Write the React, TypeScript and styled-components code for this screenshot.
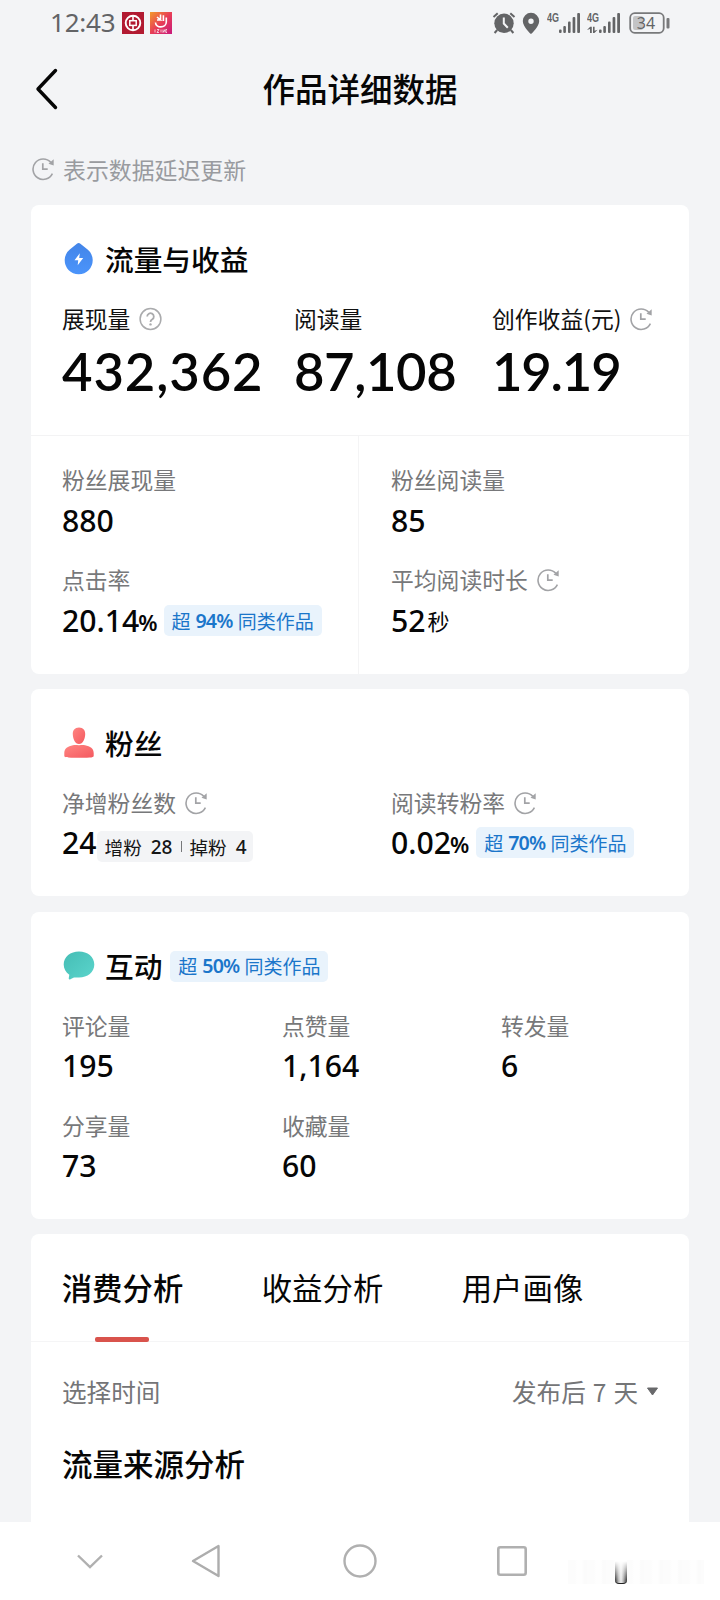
import React from "react";
import styled, { createGlobalStyle } from "styled-components";

const cjk = `"Noto Sans CJK SC", sans-serif`;
const numeric = `"Noto Sans", "Noto Sans CJK SC", sans-serif`;

const GlobalStyle = createGlobalStyle`
  * { box-sizing: border-box; }
  html, body { margin: 0; padding: 0; background: #f3f4f6; }
  body { font-family: ${cjk}; color: #060606; }
  svg { display: block; flex: none; }
`;

const Screen = styled.div`
  width: 720px;
  height: 1600px;
  overflow: hidden;
  display: flex;
  flex-direction: column;
  background: #f3f4f6;
`;

const StatusBar = styled.header`
  height: 45px;
  padding: 0 49px 0 50px;
  display: flex;
  align-items: center;
  justify-content: space-between;
  color: #636466;
`;

const StatusGroup = styled.div`
  display: flex;
  align-items: center;
`;

const Clock = styled.span`
  width: 72px;
  font: 400 26px/45px ${numeric};
  letter-spacing: -0.2px;
`;

const AppBadges = styled.div`
  display: flex;
  gap: 6px;
`;

const StatusIcons = styled.div`
  display: flex;
  align-items: center;
`;

const NavBar = styled.div`
  height: 88px;
  padding: 0 35px;
  display: grid;
  grid-template-columns: 60px 1fr 60px;
  align-items: center;
`;

const PageTitle = styled.h1`
  margin: 0 0 2px;
  text-align: center;
  font: 500 32.5px/48px ${cjk};
`;

const DelayNote = styled.div`
  height: 72px;
  padding: 0 32px;
  display: flex;
  align-items: center;
  gap: 8px;
  color: #999b9f;
  font-size: 22.9px;
  line-height: 34px;
`;

const Content = styled.main`
  flex: 1;
  padding: 0 31px;
  display: flex;
  flex-direction: column;
  min-height: 0;
`;

const Card = styled.section<{ $height: number; $after?: number; $open?: boolean }>`
  flex: none;
  height: ${(p) => p.$height}px;
  margin-bottom: ${(p) => p.$after ?? 0}px;
  border-radius: ${(p) => (p.$open ? "8px 8px 0 0" : "8px")};
  background: #fff;
  display: flex;
  flex-direction: column;
`;

const CardHeading = styled.div<{ $top: number }>`
  margin: ${(p) => p.$top}px 32px 0;
  height: 40px;
  display: flex;
  align-items: center;
`;

const HeadingText = styled.h2`
  margin: 0 8px 0 10px;
  font: 500 28.7px/40px ${cjk};
`;

const Metric = styled.div`
  display: flex;
  flex-direction: column;
`;

const MetricLabel = styled.div<{ $dark?: boolean }>`
  height: 32px;
  display: flex;
  align-items: center;
  gap: 9px;
  white-space: nowrap;
  font-size: 22.8px;
  line-height: 30px;
  padding-bottom: 1px;
  color: ${(p) => (p.$dark ? "#111" : "#77787a")};
`;

const MetricValue = styled.div`
  height: 40px;
  margin-top: 5px;
  display: flex;
  align-items: center;
  white-space: nowrap;
  font: 500 30.2px/40px ${numeric};
`;

const Unit = styled.span<{ $cjk?: boolean }>`
  font: ${(p) => (p.$cjk ? 400 : 600)} 22px/40px ${numeric};
  margin: ${(p) => (p.$cjk ? "0 0 0 2px" : "2px 0 0 -1px")};
`;

const HeroRow = styled.div`
  margin-top: 16px;
  height: 141px;
  padding: 8px 31px 0;
  display: grid;
  grid-template-columns: 232px 198px 1fr;
  border-bottom: 1px solid #f3f3f4;
`;

const HeroValue = styled.div<{ $tracking: number }>`
  height: 64px;
  margin-top: 4px;
  font: 600 52.6px/64px Lato, ${cjk};
  letter-spacing: ${(p) => p.$tracking}px;
  white-space: nowrap;
`;

const SplitPanel = styled.div`
  flex: 1;
  display: grid;
  grid-template-columns: 328px 1fr;
`;

const SplitColumn = styled.div<{ $divided?: boolean }>`
  padding: 28px 0 0 ${(p) => (p.$divided ? 31 : 32)}px;
  border-right: ${(p) => (p.$divided ? "1px solid #f4f4f5" : "none")};
  display: flex;
  flex-direction: column;
  gap: 23px;
`;

const MetricGrid = styled.div<{ $columns: string; $top: number }>`
  margin-top: ${(p) => p.$top}px;
  padding-left: 31px;
  display: grid;
  grid-template-columns: ${(p) => p.$columns};
  row-gap: 24px;

  ${MetricValue} {
    margin-top: 4px;
  }
`;

const Tag = styled.span<{ $gap?: number }>`
  height: 31px;
  width: 158px;
  margin-left: ${(p) => p.$gap ?? 0}px;
  margin-bottom: ${(p) => (p.$gap ? 1 : 0)}px;
  border-radius: 5px;
  background: #e9f3fc;
  color: #1b76ca;
  display: flex;
  align-items: center;
  justify-content: center;
  gap: 5px;
  white-space: nowrap;
  font: 400 19px/30px ${cjk};

  b {
    font: 600 19.6px/30px ${numeric};
    letter-spacing: -0.8px;
  }
`;

const FansTag = styled.span`
  height: 31px;
  width: 156px;
  margin-top: 7px;
  border-radius: 5px;
  background: #f3f4f6;
  color: #161616;
  display: flex;
  align-items: center;
  padding-left: 8px;
  white-space: nowrap;
  font: 400 18.6px/30px ${cjk};

  b {
    margin-left: 9px;
    font: 500 19px/30px ${numeric};
  }
`;

const TagRule = styled.i`
  width: 1px;
  height: 11px;
  margin: 0 8px;
  background: #77787a;
`;

const Tabs = styled.nav`
  height: 108px;
  padding-left: 30.5px;
  display: grid;
  grid-template-columns: 200px 200px 1fr;
  border-bottom: 1px solid #f5f5f6;
`;

const Tab = styled.div<{ $active?: boolean }>`
  width: 122px;
  display: flex;
  flex-direction: column;
  align-items: center;
  justify-content: space-between;
  padding-top: 31px;
  white-space: nowrap;
  font: ${(p) => (p.$active ? 500 : 400)} 30.4px/44px ${cjk};

  &::after {
    content: "";
    width: 54px;
    height: 5px;
    margin: 0 2px -1px 0;
    border-radius: 2px;
    background: ${(p) => (p.$active ? "#d9534c" : "transparent")};
  }
`;

const FilterRow = styled.div`
  height: 99px;
  padding: 0 31px 1px;
  display: flex;
  align-items: center;
  justify-content: space-between;
  color: #747577;
  font-size: 24.6px;
  line-height: 36px;
`;

const FilterValue = styled.span`
  display: flex;
  align-items: center;
  gap: 9px;
  word-spacing: 1.5px;
`;

const SectionTitle = styled.h3`
  margin: 0 31px;
  font: 500 30.5px/44px ${cjk};
`;

const SystemNav = styled.footer`
  flex: none;
  height: 78px;
  background: #fff;
  display: flex;
  align-items: center;
  padding-left: 76px;
`;

const NavSlot = styled.div<{ $width: number }>`
  width: ${(p) => p.$width}px;
`;

const Watermark = styled.div`
  width: 136px;
  height: 24px;
  margin-top: 22px;
  padding-left: 47px;
  background: repeating-linear-gradient(90deg, #fcfcfc 0 7px, #fefefe 9px 14px, #fbfbfb 16px 19px);
`;

const WatermarkMark = styled.div`
  width: 12px;
  height: 24px;
  border-radius: 0 0 4px 4px;
  border-bottom: 1px solid #222;
  background:
    linear-gradient(180deg, #fff 5%, rgba(255, 255, 255, 0) 90%),
    linear-gradient(90deg, #333 0, #bbb 30%, #eee 50%, #bbb 68%, #333 100%);
`;

const DelayIcon = () => (
  <svg width="23" height="24" viewBox="0 0 23 24" fill="none" stroke="#a2a3a6" strokeWidth="1.6">
    <path d="M20.4 16.7A10.2 10.2 0 1 1 18.8 5.4" />
    <path d="M21.7 2.2v6.2l-5.2-1.6Z" fill="#a2a3a6" stroke="none" />
    <path d="M10.8 6.3v5.8h4.9" strokeWidth="1.7" />
  </svg>
);

const HelpIcon = () => (
  <svg width="23" height="24" viewBox="0 0 23 24" fill="none" stroke="#aaabad" strokeWidth="1.5">
    <circle cx="11.5" cy="12" r="10.4" />
    <path d="M8.2 9.5a3.3 3.3 0 1 1 5.1 2.8c-1.3.8-1.8 1.3-1.8 2.6" strokeWidth="1.8" />
    <circle cx="11.5" cy="17.4" r="1.2" fill="#aaabad" stroke="none" />
  </svg>
);

const BackIcon = () => (
  <svg width="24" height="42" viewBox="0 0 24 42" fill="none" stroke="#050505" strokeWidth="3.4" strokeLinecap="round" strokeLinejoin="round">
    <path d="M20.5 2.5 3 21l17.5 18.5" />
  </svg>
);

const BankBadge = () => (
  <svg width="22" height="22" viewBox="0 0 22 22" fill="none" stroke="#fff">
    <rect width="22" height="22" fill="#b21a31" stroke="none" />
    <circle cx="11" cy="11" r="7.3" strokeWidth="1.9" />
    <rect x="7.8" y="8.7" width="6.4" height="4.7" strokeWidth="1.5" />
    <path d="M11 4v4.7M11 13.4V18" strokeWidth="1.6" />
  </svg>
);

const GestureBadge = () => (
  <svg width="22" height="22" viewBox="0 0 22 22" fill="none" stroke="#fff">
    <defs>
      <linearGradient id="gesture" x1="0" y1="0" x2="1" y2="1">
        <stop offset="0" stopColor="#f39a2b" />
        <stop offset=".5" stopColor="#e83e56" />
        <stop offset="1" stopColor="#c8197c" />
      </linearGradient>
    </defs>
    <rect width="22" height="22" fill="url(#gesture)" stroke="none" />
    <path d="M5.5 10.5c0 6 10.8 5.8 10.8-.5V5.5M13.4 9V3.2M10.5 8V2.5M7 5l3.5 3H7" strokeWidth="1.6" />
    <path d="M5 17.5v3M7 17.5h2l-2 3h2M11 17.5v3M13 17.5v3l2-3v3M17 17.5h-1v3h1" strokeWidth=".7" />
  </svg>
);

const AlarmIcon = () => (
  <svg width="24" height="24" viewBox="0 0 24 24" fill="none" stroke="#636466">
    <circle cx="12" cy="12.3" r="9.7" fill="#636466" stroke="none" />
    <path d="M1.5 6 5.7 2.2M18.3 2.2 22.5 6M5.2 19l-2.6 3M18.8 19l2.6 3" strokeWidth="2" />
    <path d="M11.8 6.5v6l4 4.3" stroke="#f3f4f6" strokeWidth="2" />
  </svg>
);

const PinIcon = () => (
  <svg width="18" height="24" viewBox="0 0 18 24">
    <path fillRule="evenodd" fill="#636466" d="M9 1.8a8.2 8.2 0 0 0-8.2 8.1C.8 15.8 9 23 9 23s8.2-7.2 8.2-13.1A8.2 8.2 0 0 0 9 1.8Zm0 5.7a2.7 2.7 0 1 1 0 5.4 2.7 2.7 0 0 1 0-5.4Z" />
  </svg>
);

const SignalIcon = ({ active }: { active?: boolean }) => (
  <svg width="34" height="24" viewBox="0 0 34 24" fill="#636466">
    <text x="0" y="10.5" fontSize="12" fontWeight="700" fontFamily="Liberation Sans, sans-serif" textLength="12" lengthAdjust="spacingAndGlyphs">4G</text>
    <rect x="12" y="18.5" width="2.6" height="3.5" rx="1" />
    <rect x="16.3" y="15" width="2.6" height="7" rx="1" />
    <rect x="21" y="10.5" width="2.6" height="11.5" rx="1" />
    <rect x="25.6" y="6" width="2.7" height="16" rx="1" />
    <rect x="30.2" y="2" width="2.8" height="20" rx="1" />
    {active && <path d="m0 19 3.2-3.2h1.6V22H3v-4l-3 1Zm6-3.2h1.6v4l3-1-3.2 3.2H6Z" />}
  </svg>
);

const BatteryIcon = () => (
  <svg width="42" height="24" viewBox="0 0 42 24" fill="none">
    <rect x="1.2" y="2.2" width="33.5" height="19.6" rx="4.5" stroke="#78797b" strokeWidth="1.8" />
    <rect x="4" y="5" width="10" height="14" rx="2" fill="#c3c4c6" />
    <rect x="37.5" y="7" width="3" height="10.5" rx="1" fill="#78797b" />
    <text x="17" y="17.7" textAnchor="middle" fontSize="16" fontWeight="400" fontFamily="Noto Sans, sans-serif" fill="#636466">34</text>
  </svg>
);

const TrafficIcon = () => (
  <svg width="32" height="34" viewBox="0 0 32 34">
    <defs>
      <linearGradient id="traffic" x1="0" y1="0" x2="0" y2="1">
        <stop offset="0" stopColor="#4385e8" />
        <stop offset="1" stopColor="#4b94fb" />
      </linearGradient>
    </defs>
    <path fill="url(#traffic)" d="M13.9 1.8c1.2-1 2.3-1 3.5 0l7.2 5.7a14 14 0 1 1-17.8 0Z" />
    <path fill="#fff" d="m16.8 11.3-5.3 7h3.7l-.5 5 5.5-7.2h-4Z" />
  </svg>
);

const FansIcon = () => (
  <svg width="32" height="34" viewBox="0 0 32 34">
    <defs>
      <linearGradient id="fans" x1="0" y1="0" x2="1" y2="1">
        <stop offset="0" stopColor="#ff8582" />
        <stop offset="1" stopColor="#f4595f" />
      </linearGradient>
    </defs>
    <path fill="url(#fans)" d="M16 1.5c4.3 0 6.5 3 6.2 7-.3 4.7-2.2 9.5-6.2 9.5s-5.9-4.8-6.2-9.5c-.3-4 1.9-7 6.2-7Z" />
    <path fill="url(#fans)" d="M1.3 27c0-4.5 3.5-6.5 8.7-7.7 2.3-.5 3.7 0 6 0s3.7-.5 6 0c5.2 1.2 8.7 3.2 8.7 7.7v2.5c0 2-1.3 2.3-14.7 2.3S1.3 31.5 1.3 29.5Z" />
  </svg>
);

const InteractionIcon = () => (
  <svg width="32" height="34" viewBox="0 0 32 34">
    <defs>
      <linearGradient id="interaction" x1="0" y1="0" x2="1" y2="1">
        <stop offset="0" stopColor="#45bdb5" />
        <stop offset="1" stopColor="#5bd5cc" />
      </linearGradient>
    </defs>
    <path fill="url(#interaction)" d="M16 2.5c8.5 0 15.3 5.3 15.3 13S24.5 28.5 16 28.5c-2 0-3.5-.1-5 .1-1.5.4-2.8 1.5-4 1.8-1.1.3-1.4-.6-1.2-1.600l.5-3C2.8 23.3.7 19.7.7 15.5.7 7.8 7.5 2.5 16 2.5Z" />
  </svg>
);

const PeerTag = ({ percent, gap }: { percent: number; gap?: number }) => (
  <Tag $gap={gap}>
    <span>超</span>
    <b>{percent}%</b>
    <span>同类作品</span>
  </Tag>
);

type StatProps = { label: string; delayed?: boolean; children: React.ReactNode };

const Stat = ({ label, delayed, children }: StatProps) => (
  <Metric>
    <MetricLabel>
      {label}
      {delayed && <DelayIcon />}
    </MetricLabel>
    <MetricValue>{children}</MetricValue>
  </Metric>
);

export default function App() {
  return (
    <Screen>
      <GlobalStyle />
      <StatusBar>
        <StatusGroup>
          <Clock>12:43</Clock>
          <AppBadges>
            <BankBadge />
            <GestureBadge />
          </AppBadges>
        </StatusGroup>
        <StatusIcons>
          <NavSlot $width={30}><AlarmIcon /></NavSlot>
          <NavSlot $width={25}><PinIcon /></NavSlot>
          <NavSlot $width={40}><SignalIcon /></NavSlot>
          <NavSlot $width={42}><SignalIcon active /></NavSlot>
          <BatteryIcon />
        </StatusIcons>
      </StatusBar>

      <NavBar>
        <BackIcon />
        <PageTitle>作品详细数据</PageTitle>
      </NavBar>

      <DelayNote>
        <DelayIcon />
        表示数据延迟更新
      </DelayNote>

      <Content>
        <Card $height={469} $after={15}>
          <CardHeading $top={34}>
            <TrafficIcon />
            <HeadingText>流量与收益</HeadingText>
          </CardHeading>
          <HeroRow>
            <Metric>
              <MetricLabel $dark>展现量<HelpIcon /></MetricLabel>
              <HeroValue $tracking={0.9}>432,362</HeroValue>
            </Metric>
            <Metric>
              <MetricLabel $dark>阅读量</MetricLabel>
              <HeroValue $tracking={-0.4}>87,108</HeroValue>
            </Metric>
            <Metric>
              <MetricLabel $dark>创作收益(元)<DelayIcon /></MetricLabel>
              <HeroValue $tracking={-1.2}>19.19</HeroValue>
            </Metric>
          </HeroRow>
          <SplitPanel>
            <SplitColumn $divided>
              <Stat label="粉丝展现量">880</Stat>
              <Stat label="点击率">20.14<Unit>%</Unit><PeerTag percent={94} gap={6} /></Stat>
            </SplitColumn>
            <SplitColumn>
              <Stat label="粉丝阅读量">85</Stat>
              <Stat label="平均阅读时长" delayed>52<Unit $cjk>秒</Unit></Stat>
            </SplitColumn>
          </SplitPanel>
        </Card>

        <Card $height={207} $after={16}>
          <CardHeading $top={34}>
            <FansIcon />
            <HeadingText>粉丝</HeadingText>
          </CardHeading>
          <MetricGrid $columns="329px 1fr" $top={24}>
            <Stat label="净增粉丝数" delayed>
              24
              <FansTag>增粉<b>28</b><TagRule />掉粉<b>4</b></FansTag>
            </Stat>
            <Stat label="阅读转粉率" delayed>0.02<Unit>%</Unit><PeerTag percent={70} gap={7} /></Stat>
          </MetricGrid>
        </Card>

        <Card $height={307} $after={15}>
          <CardHeading $top={34}>
            <InteractionIcon />
            <HeadingText>互动</HeadingText>
            <PeerTag percent={50} />
          </CardHeading>
          <MetricGrid $columns="220px 219px 1fr" $top={24}>
            <Stat label="评论量">195</Stat>
            <Stat label="点赞量">1,164</Stat>
            <Stat label="转发量">6</Stat>
            <Stat label="分享量">73</Stat>
            <Stat label="收藏量">60</Stat>
          </MetricGrid>
        </Card>

        <Card $height={288} $open>
          <Tabs>
            <Tab $active>消费分析</Tab>
            <Tab>收益分析</Tab>
            <Tab>用户画像</Tab>
          </Tabs>
          <FilterRow>
            <span>选择时间</span>
            <FilterValue>
              发布后 7 天
              <svg width="11" height="9" viewBox="0 0 11 9">
                <path d="M.5 1h10L5.5 8Z" fill="#68696b" stroke="#68696b" strokeLinejoin="round" />
              </svg>
            </FilterValue>
          </FilterRow>
          <SectionTitle>流量来源分析</SectionTitle>
        </Card>
      </Content>

      <SystemNav>
        <NavSlot $width={115}>
          <svg width="28" height="18" viewBox="0 0 28 18" fill="none" stroke="#b0b0b0" strokeWidth="2.4">
            <path d="M2 3.5 14 15 26 3.5" />
          </svg>
        </NavSlot>
        <NavSlot $width={152}>
          <svg width="30" height="36" viewBox="0 0 30 36" fill="none" stroke="#adadad" strokeWidth="2.4" strokeLinejoin="round">
            <path d="M27.5 3v30L2 18Z" />
          </svg>
        </NavSlot>
        <NavSlot $width={154}>
          <svg width="34" height="34" viewBox="0 0 34 34" fill="none" stroke="#b0b0b0" strokeWidth="2.4">
            <circle cx="17" cy="17" r="15.5" />
          </svg>
        </NavSlot>
        <NavSlot $width={71}>
          <svg width="30" height="30" viewBox="0 0 30 30" fill="none" stroke="#b0b0b0" strokeWidth="2.6">
            <rect x="1.3" y="1.3" width="27.4" height="27.4" rx="2" />
          </svg>
        </NavSlot>
        <Watermark>
          <WatermarkMark />
        </Watermark>
      </SystemNav>
    </Screen>
  );
}
